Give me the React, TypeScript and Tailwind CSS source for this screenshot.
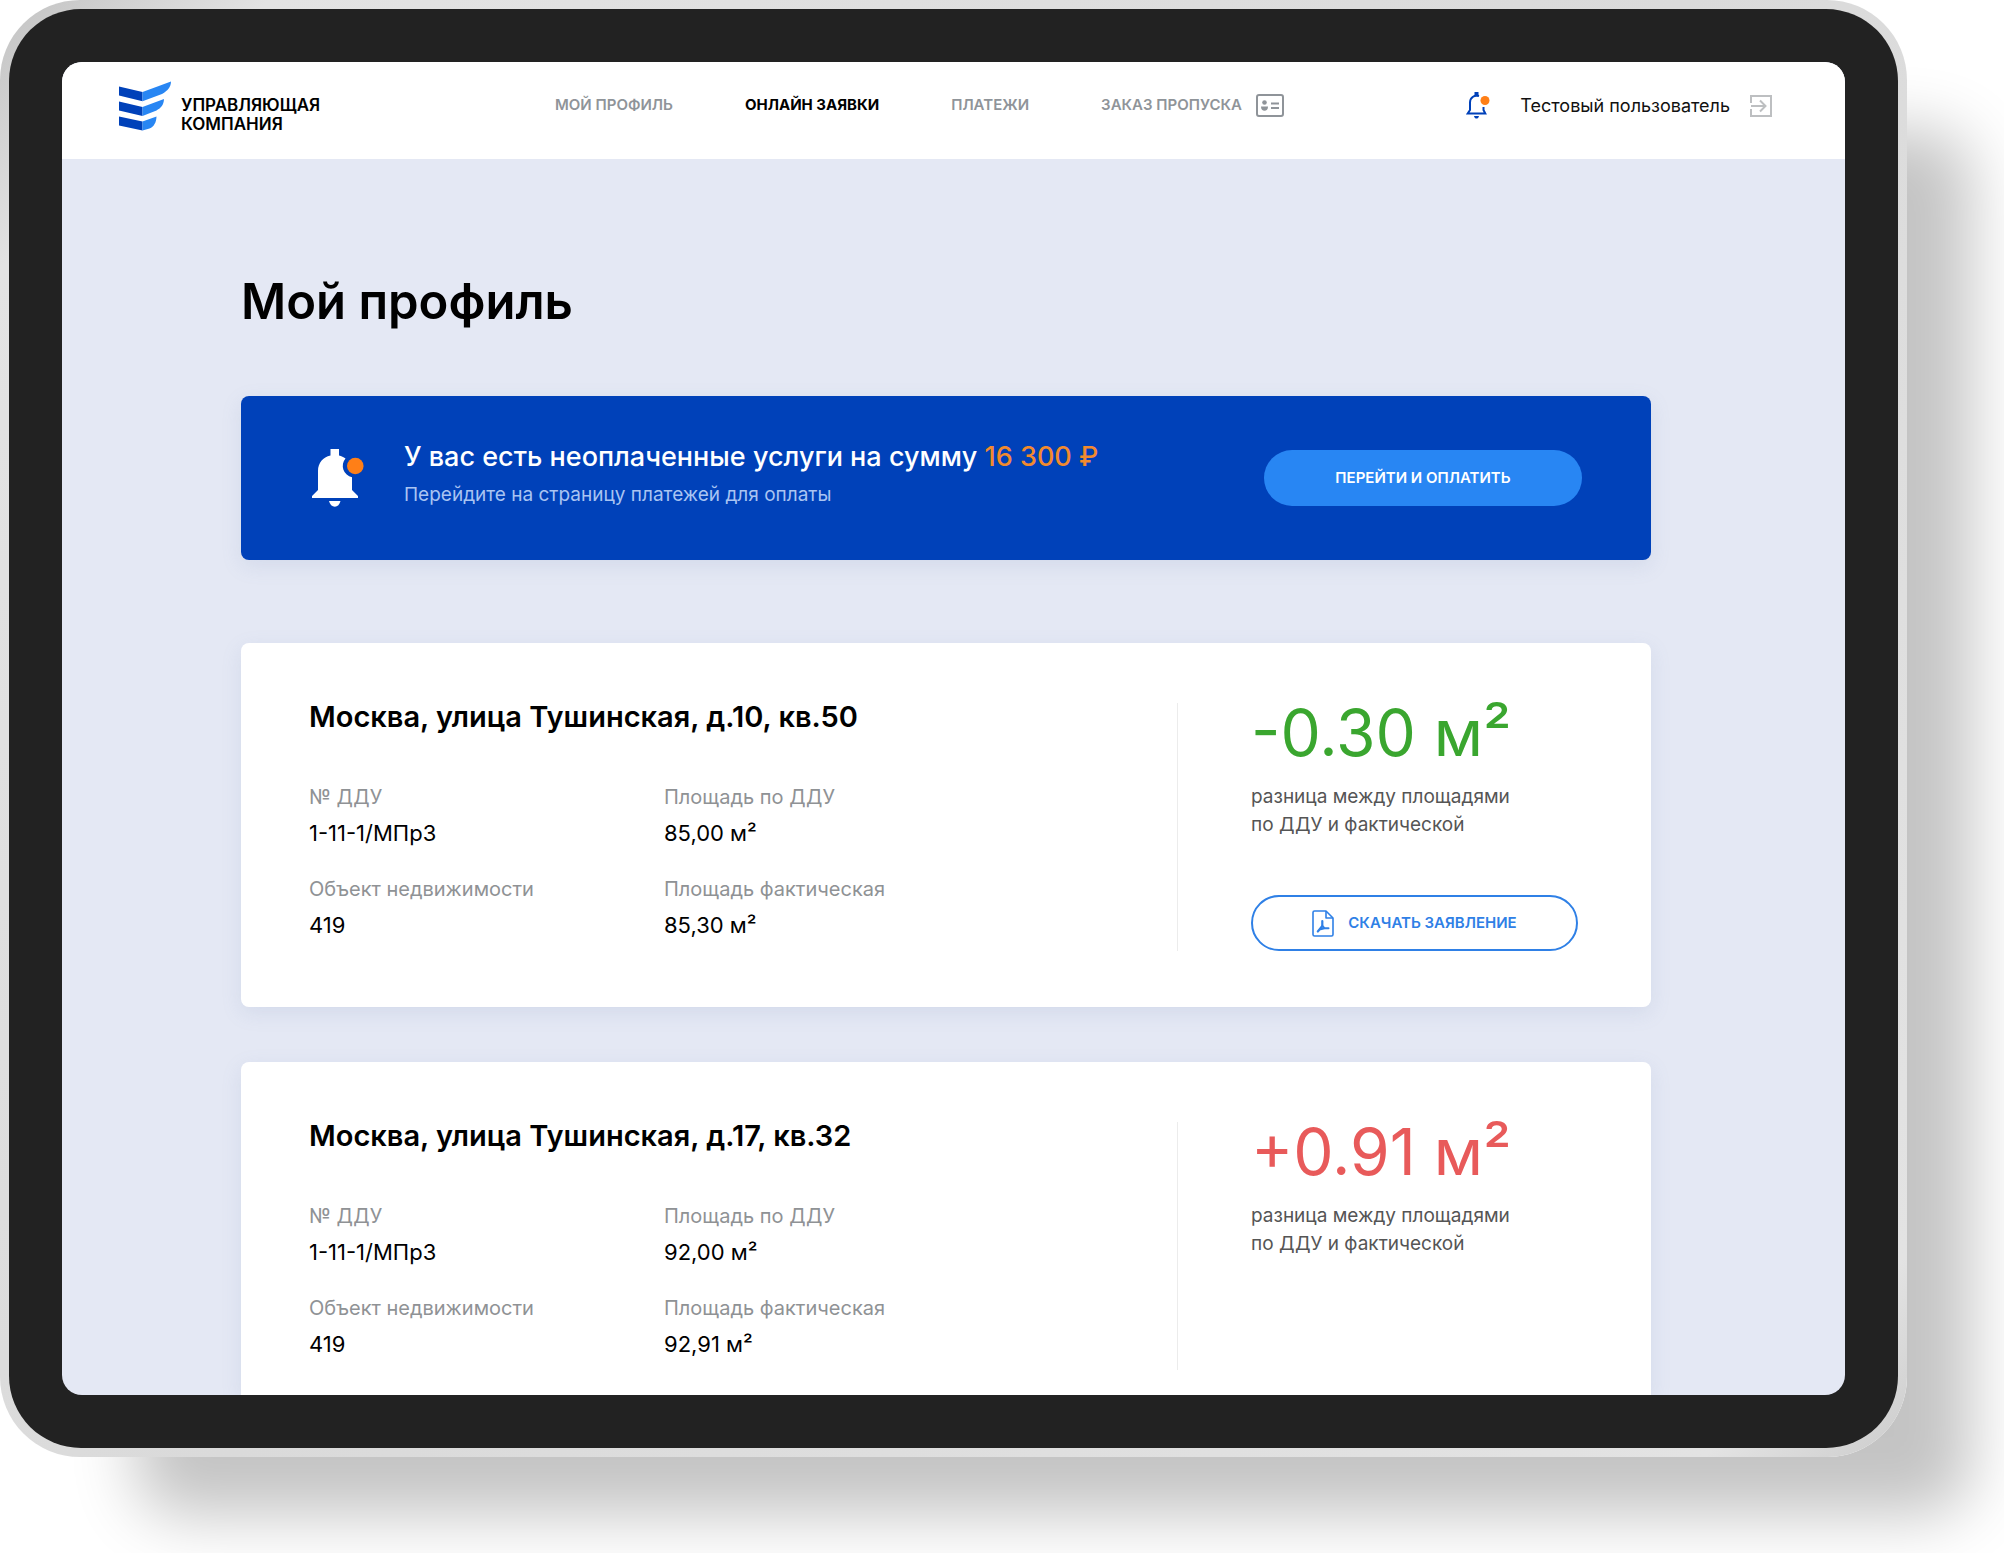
import { clsx } from 'clsx';

interface Property {
  address: string;
  contract: string;
  unit: string;
  plannedArea: string;
  actualArea: string;
  diff: string;
  hasStatement: boolean;
}

const NAV = [
  { label: 'МОЙ ПРОФИЛЬ', active: false, pass: false },
  { label: 'ОНЛАЙН ЗАЯВКИ', active: true, pass: false },
  { label: 'ПЛАТЕЖИ', active: false, pass: false },
  { label: 'ЗАКАЗ ПРОПУСКА', active: false, pass: true },
];

const PROPERTIES: Property[] = [
  {
    address: 'Москва, улица Тушинская, д.10, кв.50',
    contract: '1-11-1/МПр3',
    unit: '419',
    plannedArea: '85,00 м²',
    actualArea: '85,30 м²',
    diff: '-0.30 м²',
    hasStatement: true,
  },
  {
    address: 'Москва, улица Тушинская, д.17, кв.32',
    contract: '1-11-1/МПр3',
    unit: '419',
    plannedArea: '92,00 м²',
    actualArea: '92,91 м²',
    diff: '+0.91 м²',
    hasStatement: false,
  },
];

function LogoMark() {
  return (
    <svg width="52" height="50" viewBox="0 0 52 50" aria-hidden="true">
      <g fill="#0041b9">
        <path d="M0 5.5 23.5 11v9.300L0 14.500z" />
        <path d="M0 20.500 23.500 26v9L0 29.500z" />
        <path d="M0 35.500 23.500 40.500v9L0 44.500z" />
      </g>
      <g fill="#2886f3">
        <path d="M23.500 11 52 .5c-.2 5.500-3 9-9 12.500l-19.500 7.300z" />
        <path d="M23.500 26 45 18c-.3 5.500-2.500 8.500-7.500 11.500l-14 5.500z" />
        <path d="M23.500 40.500 37.500 35.500c-.3 6-2.500 10-7 12l-7 2z" />
      </g>
    </svg>
  );
}

function PassIcon() {
  return (
    <svg width="28" height="23" viewBox="0 0 28 23" fill="none" aria-hidden="true">
      <rect x="1" y="1" width="26" height="21" rx="2" stroke="currentColor" strokeWidth="2" />
      <circle cx="8.500" cy="8.500" r="2.300" fill="currentColor" />
      <path d="M5 12.500h7c0 3-1.500 4.200-3.500 4.200S5 15.500 5 12.500z" fill="currentColor" />
      <path d="M15 9.500h8M15 14h8" stroke="currentColor" strokeWidth="2" />
    </svg>
  );
}

function BellOutline() {
  return (
    <svg width="24" height="27" viewBox="0 0 24 27" fill="none" aria-hidden="true">
      <path d="M8.500 0h4v4h-4z" fill="#0041b9" />
      <path
        d="M13 4C8 2.500 4 6 4 10.500V18l-2.300 3.500h17.600L17.500 18v-3"
        stroke="#0041b9"
        strokeWidth="2"
      />
      <path d="M8 24h5c-.5 2-1.300 2.500-2.500 2.500S8.500 26 8 24z" fill="#0041b9" />
      <circle cx="19" cy="8.500" r="4.500" fill="#ff7f17" />
    </svg>
  );
}

function BellSolid() {
  return (
    <svg width="52" height="58" viewBox="0 0 52 58" aria-hidden="true">
      <path
        d="M18.500 0h8.500v6.500c2.500.6 4.500 1.500 6.500 3a11.500 11.500 0 0 0 6.500 18.700V41l6 6v2H0v-2l6-6V22C6 14 11 8 18.500 6.500z"
        fill="#fff"
      />
      <path d="M17 52h11.500c-.8 3.500-3 5.700-5.700 5.700S17.800 55.500 17 52z" fill="#fff" />
      <circle cx="43.300" cy="17" r="8.300" fill="#ff7f17" />
    </svg>
  );
}

function ExitIcon() {
  return (
    <svg width="22" height="22" viewBox="0 0 22 22" fill="none" stroke="#bdbfc1" strokeWidth="2" aria-hidden="true">
      <path d="M1 8V1h20v20H1v-7" />
      <path d="M1 11h14M10 5.500l5.500 5.500-5.500 5.500" />
    </svg>
  );
}

function PdfIcon() {
  return (
    <svg width="22" height="27" viewBox="0 0 22 27" fill="none" stroke="currentColor" strokeLinejoin="round" aria-hidden="true">
      <path
        d="M2.500 1H14l7 7v16.500a1.500 1.500 0 0 1-1.500 1.500h-17A1.500 1.500 0 0 1 1 24.500v-22A1.500 1.500 0 0 1 2.500 1z"
        strokeWidth="1.600"
      />
      <path d="M14 1v7h7" strokeWidth="1.600" />
      <path d="M10.300 11v5l-4.500 5.500" strokeWidth="2.200" strokeLinecap="round" />
      <path d="M10.300 16l2.200 2.300h4M8.500 19.300l4-1" strokeWidth="2" strokeLinecap="round" />
    </svg>
  );
}

function Field({ label, value }: { label: string; value: string }) {
  return (
    <div>
      <dt className="text-[20px] leading-7 text-[#8f9295]">{label}</dt>
      <dd className="mt-1 text-[22px] leading-9 text-black">{value}</dd>
    </div>
  );
}

function PropertyCard({ property, last }: { property: Property; last: boolean }) {
  return (
    <article
      className={clsx(
        'flex bg-white px-[68px] pt-14 shadow-[0_6px_20px_rgba(120,140,190,0.15)]',
        last ? 'rounded-t-lg pb-[25px]' : 'rounded-lg pb-14',
      )}
    >
      <div className="min-w-0 flex-1">
        <h2 className="text-[29px] font-semibold leading-9 text-black">{property.address}</h2>
        <dl className="mt-12 grid grid-cols-[355px_1fr] gap-y-6">
          <Field label="№ ДДУ" value={property.contract} />
          <Field label="Площадь по ДДУ" value={property.plannedArea} />
          <Field label="Объект недвижимости" value={property.unit} />
          <Field label="Площадь фактическая" value={property.actualArea} />
        </dl>
      </div>
      <div className="mt-1 flex min-h-[248px] w-[406px] shrink-0 flex-col border-l border-[#ececec] pl-[73px]">
        <p
          className={clsx(
            'whitespace-nowrap text-[64px] leading-[60px]',
            property.diff.startsWith('-') ? 'text-[#3aa62f]' : 'text-[#e85a5a]',
          )}
        >
          {property.diff}
        </p>
        <p className="mt-5 whitespace-nowrap text-[19px] leading-7 text-[#555]">
          разница между площадями
          <br />
          по ДДУ и фактической
        </p>
        {property.hasStatement && (
          <button
            type="button"
            className="mt-auto flex h-14 w-[327px] items-center justify-center gap-[14px] rounded-full border-2 border-[#2f80e6] text-[15px] font-semibold text-[#2f80e6]"
          >
            <PdfIcon />
            СКАЧАТЬ ЗАЯВЛЕНИЕ
          </button>
        )}
      </div>
    </article>
  );
}

function Header() {
  return (
    <header className="flex h-[97px] items-center bg-white pb-[10px] pl-[57px] pr-[73px]">
      <a href="#" className="flex w-[436px] items-center gap-[10px] text-black">
        <LogoMark />
        <span className="pt-[18px] text-[17px] font-semibold leading-[19px]">
          УПРАВЛЯЮЩАЯ
          <br />
          КОМПАНИЯ
        </span>
      </a>
      <nav className="flex items-center gap-[72px] text-[15px] font-semibold">
        {NAV.map((item) => (
          <a
            key={item.label}
            href="#"
            className={clsx(
              'flex items-center gap-[14px] whitespace-nowrap',
              item.active ? 'font-bold text-black' : 'text-[#8f9499]',
            )}
          >
            {item.label}
            {item.pass && <PassIcon />}
          </a>
        ))}
      </nav>
      <div className="ml-auto flex items-center">
        <button type="button" aria-label="Уведомления" className="mr-[30px]">
          <BellOutline />
        </button>
        <span className="mr-5 whitespace-nowrap text-[18px] text-[#111]">Тестовый пользователь</span>
        <button type="button" aria-label="Выйти">
          <ExitIcon />
        </button>
      </div>
    </header>
  );
}

function DebtBanner() {
  return (
    <section className="mt-16 flex h-[164px] items-center rounded-lg bg-[#0041b9] pl-[71px] pr-[69px] shadow-[0_6px_20px_rgba(120,140,190,0.15)]">
      <BellSolid />
      <div className="ml-10 pb-2">
        <h2 className="text-[27px] font-medium leading-9 text-white">
          У вас есть неоплаченные услуги на сумму <span className="text-[#f28a2e]">16 300 ₽</span>
        </h2>
        <p className="mt-[6px] text-[19px] leading-7 text-[#a9c4f2]">
          Перейдите на страницу платежей для оплаты
        </p>
      </div>
      <button
        type="button"
        className="ml-auto h-14 w-[318px] rounded-full bg-[#2886f3] text-[15px] font-semibold text-white"
      >
        ПЕРЕЙТИ И ОПЛАТИТЬ
      </button>
    </section>
  );
}

export default function App() {
  return (
    <div className="overflow-hidden bg-white pb-24 pr-[97px] font-['Inter','Liberation_Sans',sans-serif]">
      {/* Tablet body: metal rim, bezel, then the screen */}
      <div className="rounded-[80px] bg-[linear-gradient(135deg,#c2c2c2,#e3e3e3_8%,#dadada_50%,#e3e3e3_94%,#cccccc)] p-[9px] shadow-[100px_94px_64px_-36px_rgba(0,0,0,0.235)]">
        <div className="rounded-[72px] bg-[#222] p-[53px]">
          <div className="overflow-hidden rounded-[20px] bg-[#e4e8f4]">
            <Header />
            <main className="pl-[179px] pr-[194px] pt-[113px]">
              <h1 className="text-[49px] font-semibold leading-[60px] text-black">Мой профиль</h1>
              <DebtBanner />
              <div className="mt-[83px] flex flex-col gap-[55px]">
                {PROPERTIES.map((property, i) => (
                  <PropertyCard
                    key={property.address}
                    property={property}
                    last={i === PROPERTIES.length - 1}
                  />
                ))}
              </div>
            </main>
          </div>
        </div>
      </div>
    </div>
  );
}
